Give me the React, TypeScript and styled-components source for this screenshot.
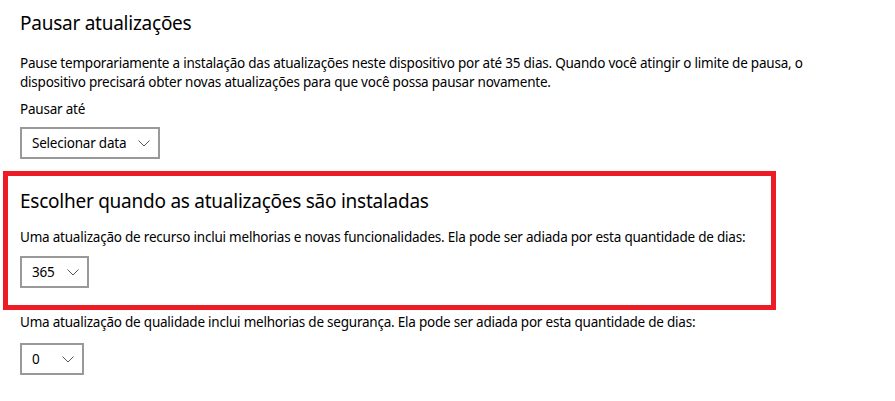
import React from 'react'
import styled, { createGlobalStyle } from 'styled-components'

const GlobalStyle = createGlobalStyle`
  html, body {
    margin: 0;
    padding: 0;
    background: #ffffff;
  }
  body {
    font-family: 'Segoe UI', 'Noto Sans', 'Open Sans', sans-serif;
    color: #000000;
  }
`

const Page = styled.div`
  width: 895px;
  height: 401px;
  box-sizing: border-box;
  padding: 9px 0 0 20px;
  overflow: hidden;
`

const Title = styled.h2<{ $mt?: number }>`
  margin: ${({ $mt }) => $mt ?? 0}px 0 0;
  font-size: 19px;
  letter-spacing: -0.25px;
  line-height: 28px;
  font-weight: 400;
  white-space: nowrap;
`

const Body = styled.p<{ $mt?: number }>`
  margin: ${({ $mt }) => $mt ?? 0}px 0 0;
  font-size: 13.5px;
  letter-spacing: -0.22px;
  line-height: 19px;
  font-weight: 400;
  width: 800px;
`

const Label = styled(Body)`
  width: auto;
`

const Highlight = styled.section`
  margin: 12px 0 0 -17px;
  width: 773px;
  box-sizing: border-box;
  border: 5px solid #ed1c24;
  padding: 11px 12px 17px;
`

const Select = styled.button<{ $mt?: number }>`
  display: flex;
  align-items: center;
  gap: 12px;
  height: 32px;
  box-sizing: border-box;
  margin-top: ${({ $mt }) => $mt ?? 0}px;
  padding: 0 8px 0 10px;
  border: 2px solid #999999;
  background: #ffffff;
  font-family: inherit;
  font-size: 13.5px;
  letter-spacing: -0.22px;
  color: #000000;
  cursor: pointer;
`

const SelectValue = styled.span<{ $minWidth?: number }>`
  min-width: ${({ $minWidth }) => $minWidth ?? 0}px;
  text-align: left;
  white-space: nowrap;
`

const Chevron = () => (
  <svg width="12" height="7" viewBox="0 0 12 7" fill="none">
    <path d="M0.5 0.5 L6 6 L11.5 0.5" stroke="#555555" strokeWidth="1" />
  </svg>
)

const Dropdown = ({ value, minWidth, mt }: { value: string; minWidth?: number; mt?: number }) => (
  <Select $mt={mt}>
    <SelectValue $minWidth={minWidth}>{value}</SelectValue>
    <Chevron />
  </Select>
)

export default function App() {
  return (
    <>
      <GlobalStyle />
      <Page>
        <Title>Pausar atualizações</Title>
        <Body $mt={17}>
          Pause temporariamente a instalação das atualizações neste dispositivo por até 35 dias. Quando você atingir o
          limite de pausa, o dispositivo precisará obter novas atualizações para que você possa pausar novamente.
        </Body>
        <Label $mt={8}>Pausar até</Label>
        <Dropdown value="Selecionar data" mt={8} />

        <Highlight>
          <Title>Escolher quando as atualizações são instaladas</Title>
          <Body $mt={13}>
            Uma atualização de recurso inclui melhorias e novas funcionalidades. Ela pode ser adiada por esta quantidade
            de dias:
          </Body>
          <Dropdown value="365" mt={9} />
        </Highlight>

        <Body $mt={3}>
          Uma atualização de qualidade inclui melhorias de segurança. Ela pode ser adiada por esta quantidade de dias:
        </Body>
        <Dropdown value="0" minWidth={18} mt={11} />
      </Page>
    </>
  )
}
